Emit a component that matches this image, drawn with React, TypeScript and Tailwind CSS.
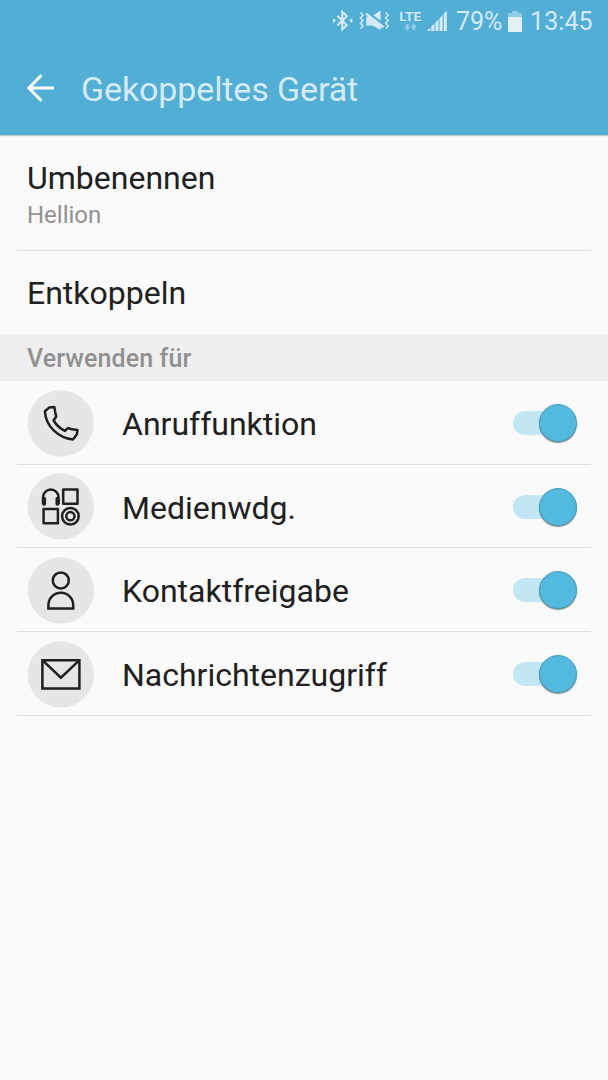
import React from 'react';

const StatusBar: React.FC = () => (
  <div className="flex h-[43px] items-center pl-[332px] text-[#d4eaf4]">
    <svg width="116" height="43" viewBox="332 0 116 43" className="shrink-0" fill="none" aria-hidden="true">
      {/* bluetooth, connected */}
      <path d="M337.4 15.8 346.8 25.2 342.3 29.4V11.8L346.8 16.2 337.4 25.6" stroke="currentColor" strokeWidth="2.1" />
      <path d="m333 18 3 2.6-3 2.6zM352.3 18l-3.2 2.6 3.2 2.6z" fill="currentColor" />
      {/* sound off, vibrating */}
      <path
        d="m360.4 12.5 2.6 2.7-2.6 2.7 2.6 2.7-2.6 2.7 2.6 2.7-2.4 2.5M385.6 12.5l2.6 2.7-2.6 2.7 2.6 2.7-2.6 2.7 2.6 2.7-2.4 2.5"
        stroke="currentColor"
        strokeWidth="1.5"
      />
      <path d="M373.3 15.3 380.6 10.5V20.8zM366.3 16.5h2.4L380.6 26v4L372.5 25.4h-6.2zM365.4 14.4l1.4-1.7 17.3 13.6-1.5 1.9z" fill="currentColor" />
      {/* data arrows */}
      <path d="M405.8 24h3v3h1.6l-3.1 3.8-3.1-3.8h1.6zM412.2 30v-3h-1.6l3.1-3.8 3.1 3.8h-1.6v3z" fill="#8bcbe4" />
      <text x="399.3" y="21" fontSize="12.8" fontWeight="600" textLength="22" lengthAdjust="spacingAndGlyphs" fill="currentColor">
        LTE
      </text>
      {/* signal strength */}
      <path d="M427 31l3.4-3.5V31zM431.3 26.6l3.1-3.1V31h-3.1zM435.4 22.4l3.1-3.2V31h-3.1zM439.5 18.2l3.1-3.2V31h-3.1zM443.7 13.7l3.1-3.2V31h-3.1z" fill="currentColor" />
    </svg>
    <div className="ml-2 flex items-center pt-px text-[25px]">
      <span className="w-[52px]">79%</span>
      <svg width="14" height="21" viewBox="0 0 14 21" className="-mt-[2px] shrink-0" aria-hidden="true">
        <path d="M4 0h6v2h4v4H0V2h4z" fill="#8fcce4" />
        <path d="M0 6h14v15H0z" fill="#e3f1f7" />
      </svg>
      <span className="ml-2 tracking-[0.1px]">13:45</span>
    </div>
  </div>
);

const icons = {
  phone: (
    <path
      d="M17.3 21 21.8 17.2 26.8 16.9C27.3 20 27.6 23.2 28.6 26.3L26 30.3C28.5 34.5 32.5 38.3 37.3 40.7L40.2 38C43.3 38.9 46.6 39.4 49.9 39.8L49.2 44.2 45.3 49.3C31.5 48 18 36.5 17.3 21Z"
      strokeLinejoin="round"
    />
  ),
  media: (
    <>
      <path d="M15.4 31V24.2a7.8 7.8 0 0 1 15.6 0V31" />
      <path d="M16.5 25.5v5M29.9 25.5v5" strokeWidth="4" strokeLinecap="round" />
      <path d="M35.6 16.4h14.3v14.2H35.6zM16 35.8h14.3V50H16z" strokeLinejoin="round" />
      <circle cx="42.8" cy="43" r="8.3" />
      <circle cx="42.8" cy="43" r="4.1" />
    </>
  ),
  person: (
    <>
      <circle cx="33.2" cy="23.2" r="8" />
      <path d="M20.8 51.4V48a12.4 12.4 0 0 1 24.8 0v3.4z" />
    </>
  ),
  mail: <path d="M14.8 19h37v28.3h-37zM15.3 19.5 33.3 36.5 51.3 19.5" />,
};

const rows: { icon: keyof typeof icons; label: string }[] = [
  { icon: 'phone', label: 'Anruffunktion' },
  { icon: 'media', label: 'Medienwdg.' },
  { icon: 'person', label: 'Kontaktfreigabe' },
  { icon: 'mail', label: 'Nachrichtenzugriff' },
];

const Toggle: React.FC<{ label: string }> = ({ label }) => (
  <button
    type="button"
    role="switch"
    aria-checked="true"
    aria-label={label}
    className="mt-[1.5px] flex h-[38px] w-16 items-center justify-end rounded-full"
  >
    <span className="-mr-[19px] h-6 w-[45px] rounded-l-full bg-[#c0e7f3]"></span>
    <span className="z-10 size-[38px] rounded-full border border-[#479db9] bg-[#53b9df] shadow-[0_1px_1px_rgba(0,0,0,0.45)]"></span>
  </button>
);

const App: React.FC = () => {
  return (
    <div className="min-h-[1080px] w-[608px] bg-[#fafafa] font-['Roboto',sans-serif] text-[#202020]">
      <header className="h-[135px] bg-[#52aed4] shadow-[0_1px_1px_rgba(0,0,0,0.2)]">
        <StatusBar />
        <div className="flex h-[92px] items-center pl-[27px]">
          <svg width="28" height="28" viewBox="0 0 28 28" fill="none" stroke="#fff" strokeWidth="3" className="-mt-[2px]" aria-hidden="true">
            <path d="M27 14H2M14.5 1.2 1.8 14l12.7 12.8" />
          </svg>
          <h1 className="ml-[26px] text-[34px] leading-[40px] tracking-[-0.12px] text-[#d4eaf4]">Gekoppeltes Gerät</h1>
        </div>
      </header>

      <main>
        <section className="mx-[17px] h-[116px] border-b border-[#dcdcdc] px-[10px] pt-[23px]">
          <h2 className="text-[32px] leading-[40px]">Umbenennen</h2>
          <p className="text-[24px] leading-[34px] text-[#919191]">Hellion</p>
        </section>
        <section className="flex h-[83px] items-center px-[27px]">
          <h2 className="text-[32px] leading-[40px]">Entkoppeln</h2>
        </section>
        <h3 className="flex h-[47px] items-center bg-[#efefef] px-[27px] pt-[3px] text-[25px] font-medium tracking-[0.1px] text-[#919191]">
          Verwenden für
        </h3>
        <ul className="mx-[17px]">
          {rows.map((row) => (
            <li key={row.label} className="flex h-[83.7px] items-center border-b border-[#dcdcdc] pr-[14px] pl-[10px]">
              <svg width="67" height="67" viewBox="-0.6 -0.2 67 67" fill="none" stroke="#202020" strokeWidth="2.5" className="mt-[1.5px] shrink-0" aria-hidden="true">
                <circle cx="33.2" cy="33.2" r="33.2" fill="#e6e6e6" stroke="none" />
                {icons[row.icon]}
              </svg>
              <span className="ml-[28px] grow pt-[3px] text-[32px] leading-[40px]">{row.label}</span>
              <Toggle label={row.label} />
            </li>
          ))}
        </ul>
      </main>
    </div>
  );
};

export default App;
